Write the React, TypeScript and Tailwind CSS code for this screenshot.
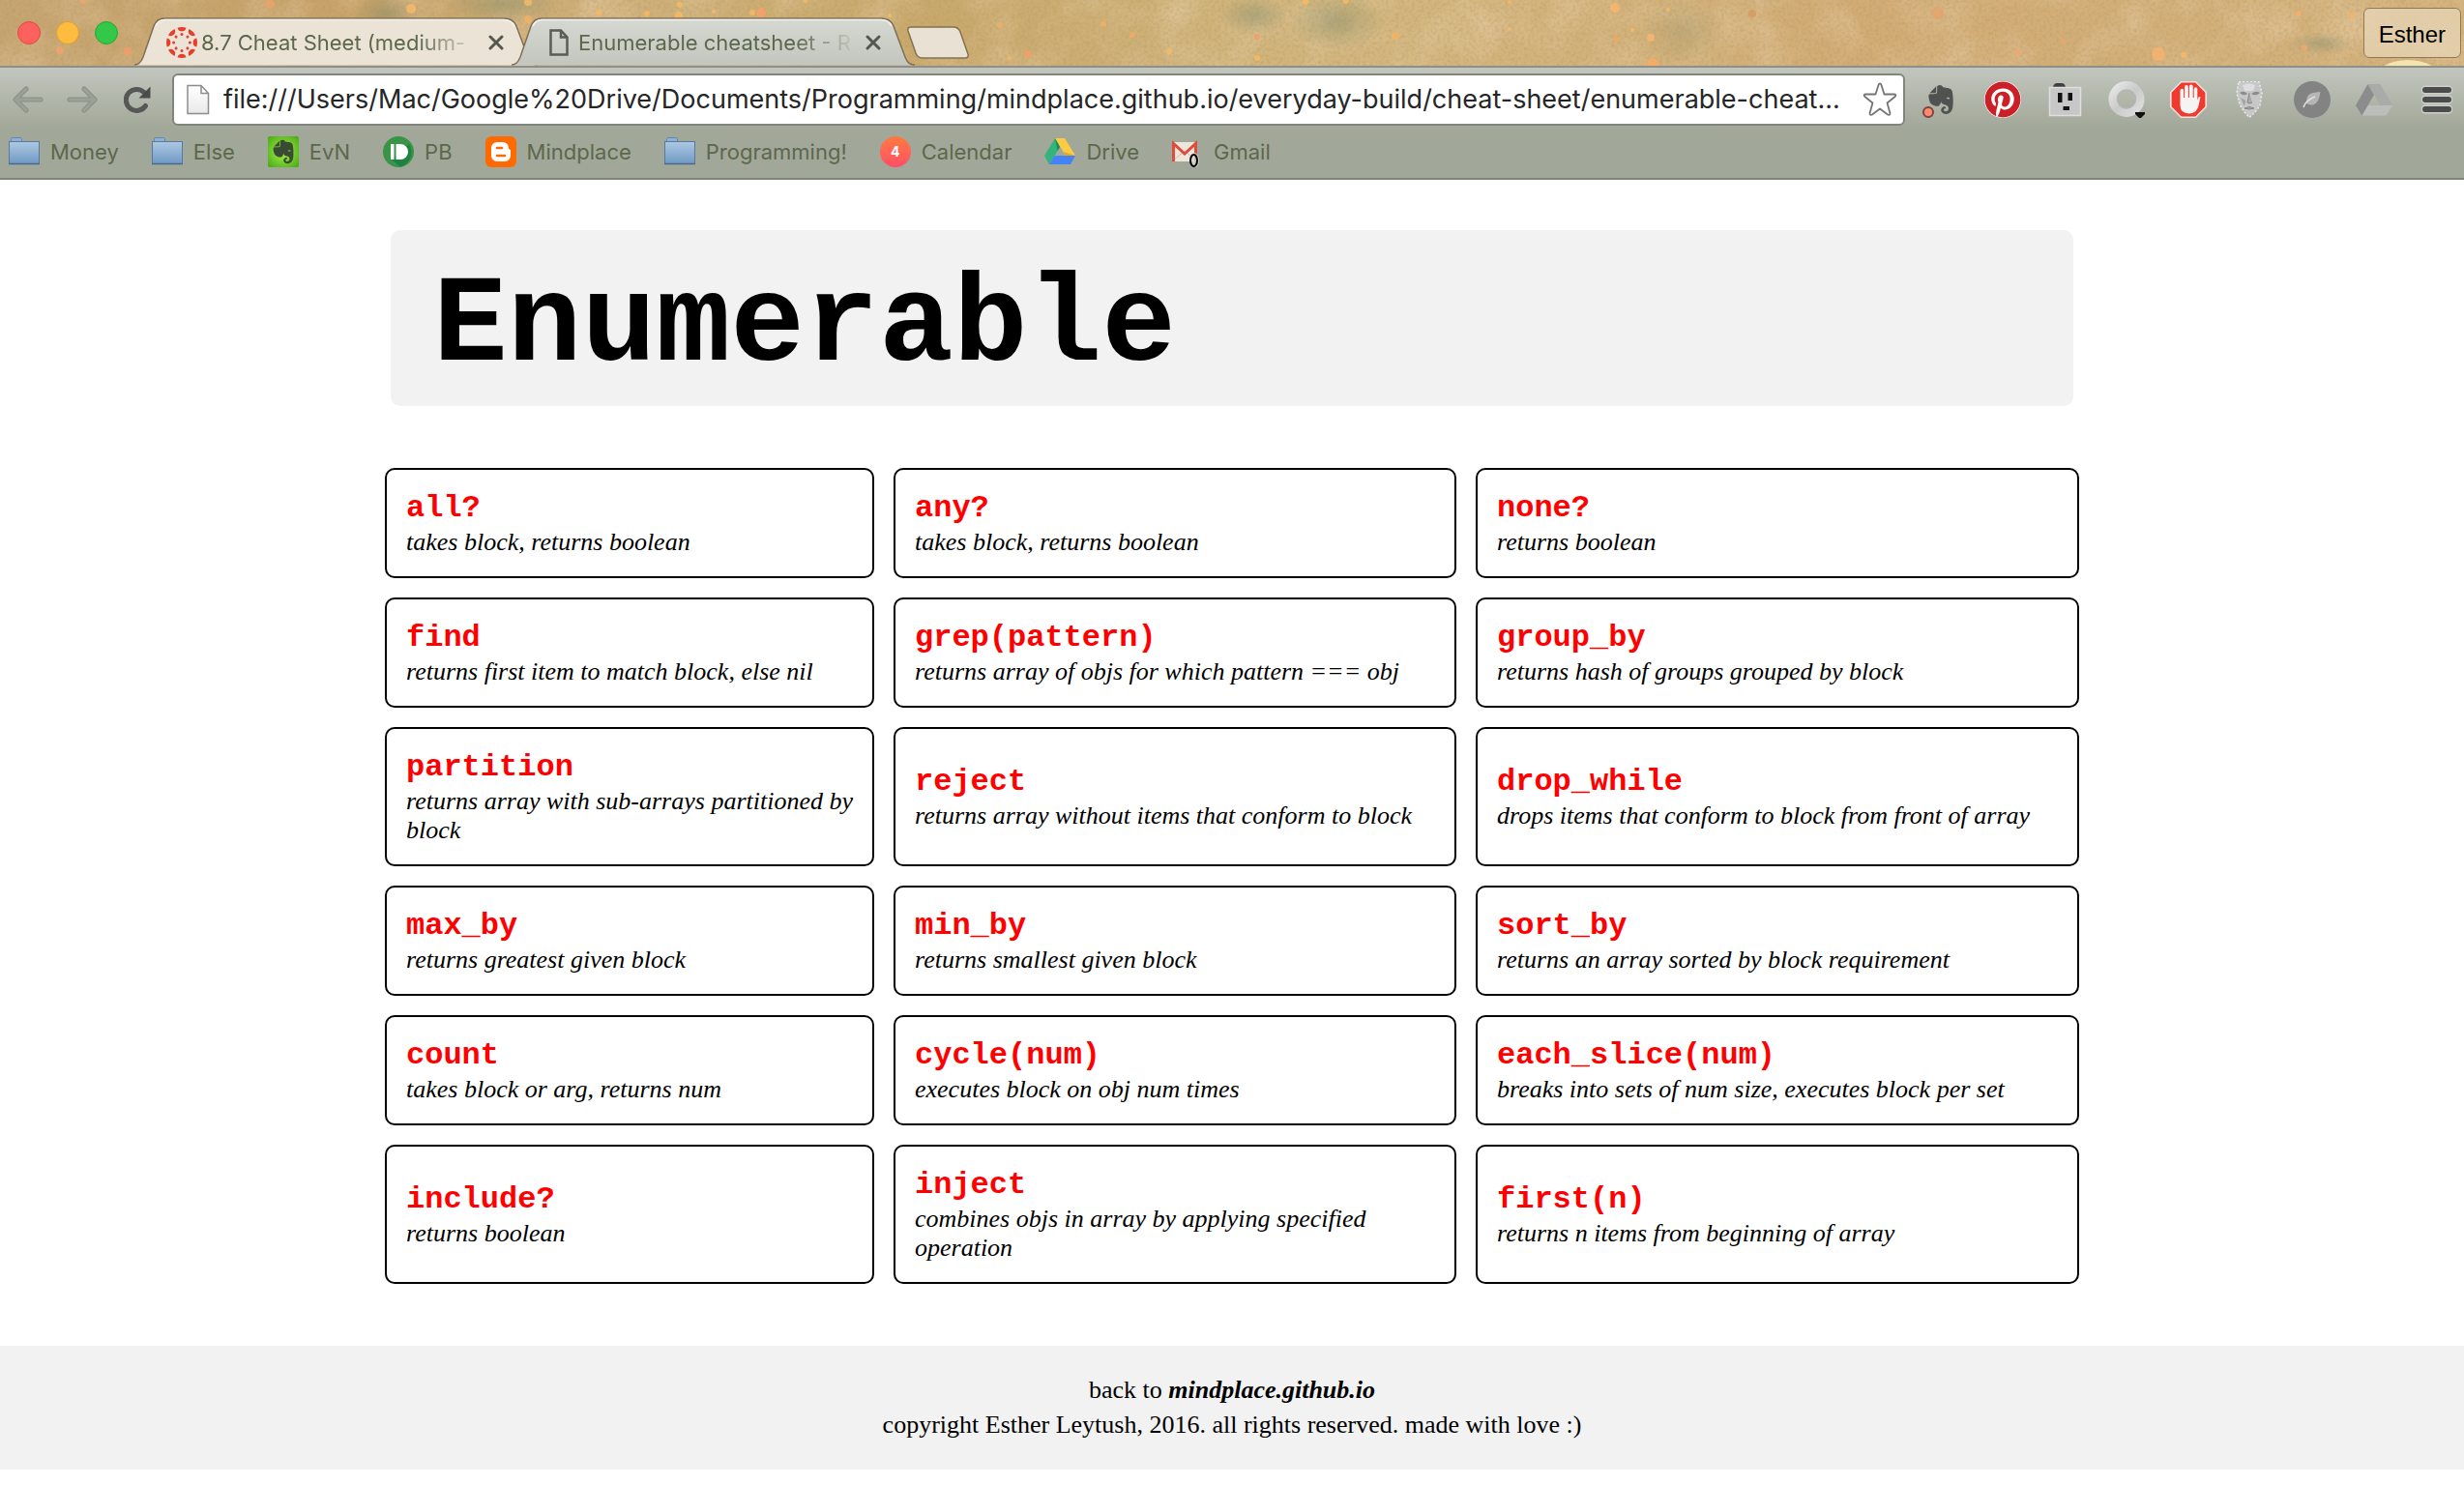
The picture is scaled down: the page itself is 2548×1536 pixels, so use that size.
import type { ReactNode } from "react";
import { FaEvernote, FaPinterest } from "react-icons/fa";

type Entry = { name: string; text: string };

const rows: Entry[][] = [
  [
    { name: "all?", text: "takes block, returns boolean" },
    { name: "any?", text: "takes block, returns boolean" },
    { name: "none?", text: "returns boolean" },
  ],
  [
    { name: "find", text: "returns first item to match block, else nil" },
    { name: "grep(pattern)", text: "returns array of objs for which pattern === obj" },
    { name: "group_by", text: "returns hash of groups grouped by block" },
  ],
  [
    { name: "partition", text: "returns array with sub-arrays partitioned by block" },
    { name: "reject", text: "returns array without items that conform to block" },
    { name: "drop_while", text: "drops items that conform to block from front of array" },
  ],
  [
    { name: "max_by", text: "returns greatest given block" },
    { name: "min_by", text: "returns smallest given block" },
    { name: "sort_by", text: "returns an array sorted by block requirement" },
  ],
  [
    { name: "count", text: "takes block or arg, returns num" },
    { name: "cycle(num)", text: "executes block on obj num times" },
    { name: "each_slice(num)", text: "breaks into sets of num size, executes block per set" },
  ],
  [
    { name: "include?", text: "returns boolean" },
    { name: "inject", text: "combines objs in array by applying specified operation" },
    { name: "first(n)", text: "returns n items from beginning of array" },
  ],
];

const specks: [number, number, number, string][] = [
  [86, 1, 3, "#f2a36b"], [62, 52, 4, "#f2a36b"], [132, 53, 4, "#f59b6a"], [279, 4, 5, "#e8a566"],
  [425, 9, 5, "#f8bc68"], [546, 2, 4, "#f8bc68"], [546, 20, 4, "#f5b265"], [619, 13, 3, "#fbb95f"],
  [669, 14, 3, "#fbb95f"], [703, 5, 3, "#fbb95f"], [702, 16, 4, "#fbb95f"], [738, 12, 2, "#fbb95f"],
  [787, 13, 5, "#f9a06a"], [778, 13, 3, "#fbb95f"], [833, 1, 2, "#fbb95f"], [920, 16, 2, "#fbb95f"],
  [1034, 26, 3, "#efb066"], [1063, 56, 4, "#f59b6a"], [1044, 60, 2, "#fbb95f"], [1141, 25, 3, "#efb066"],
  [1171, 36, 3, "#f5ab66"], [1209, 53, 3, "#fbb95f"], [1300, 38, 3, "#f59b6a"], [1300, 60, 3, "#fbb95f"],
  [1350, 2, 3, "#fbb95f"], [1392, 1, 3, "#fbb95f"], [1443, 37, 4, "#f5b265"], [1561, 2, 2, "#fbb95f"],
  [1561, 30, 2, "#fbb95f"], [1670, 8, 5, "#fbb56b"], [1688, 31, 2, "#fbb95f"], [1707, 39, 4, "#fbb56b"],
  [1709, 66, 6, "#f9ad5f"], [1671, 40, 3, "#efa861"], [1725, 10, 2, "#fbb95f"], [2004, 14, 6, "#e3a468"],
  [2087, 54, 3, "#f8a56a"], [2134, 43, 3, "#e9a870"], [2232, 56, 7, "#fab26c"], [2258, 57, 3, "#fbb95f"],
  [2377, 14, 3, "#f8b165"], [2383, 49, 3, "#f8a56a"], [2432, 16, 3, "#f8b165"], [1812, 14, 4, "#d59a5e"],
];

function Desktop() {
  return (
    <svg aria-hidden="true" className="absolute inset-0 h-full w-full" viewBox="0 0 2548 69" preserveAspectRatio="xMinYMin slice">
      <defs>
        <linearGradient id="sand" x1="0" x2="1">
          <stop offset="0" stopColor="#c6a570" />
          <stop offset="0.15" stopColor="#c9a368" />
          <stop offset="0.25" stopColor="#cfb17a" />
          <stop offset="0.38" stopColor="#c9a96b" />
          <stop offset="0.5" stopColor="#d0b47a" />
          <stop offset="0.56" stopColor="#d3b77e" />
          <stop offset="0.75" stopColor="#d2ac74" />
          <stop offset="1" stopColor="#d4b37c" />
        </linearGradient>
        <radialGradient id="moss">
          <stop offset="0" stopColor="#7f8a68" stopOpacity="0.45" />
          <stop offset="1" stopColor="#7f8a68" stopOpacity="0" />
        </radialGradient>
        <filter id="grain" x="0" y="0" width="100%" height="100%">
          <feTurbulence type="fractalNoise" baseFrequency="0.3" numOctaves="3" seed="4" />
          <feColorMatrix values="0 0 0 0 0.42  0 0 0 0 0.3  0 0 0 0 0.15  1.6 0 0 0 -0.65" />
        </filter>
        <filter id="cloud" x="0" y="0" width="100%" height="100%">
          <feTurbulence type="fractalNoise" baseFrequency="0.02" numOctaves="3" seed="9" />
          <feColorMatrix values="0 0 0 0 0.86  0 0 0 0 0.68  0 0 0 0 0.46  2 0 0 0 -0.8" />
        </filter>
      </defs>
      <rect width="2548" height="69" fill="url(#sand)" />
      <rect width="2548" height="69" filter="url(#cloud)" opacity="0.4" />
      <rect width="2548" height="69" filter="url(#grain)" opacity="0.5" />
      <ellipse cx="400" cy="14" rx="34" ry="22" fill="url(#moss)" />
      <ellipse cx="520" cy="4" rx="60" ry="20" fill="url(#moss)" />
      <ellipse cx="1298" cy="16" rx="36" ry="20" fill="url(#moss)" />
      <ellipse cx="1382" cy="22" rx="50" ry="30" fill="url(#moss)" />
      <ellipse cx="1740" cy="32" rx="44" ry="34" fill="url(#moss)" opacity="0.5" />
      <ellipse cx="2400" cy="45" rx="34" ry="12" fill="url(#moss)" />
      <ellipse cx="2490" cy="82" rx="34" ry="20" fill="#f3e3ae" />
      {specks.map(([x, y, r, c]) => (
        <circle key={`${x}-${y}`} cx={x} cy={y} r={r} fill={c} opacity="0.8" />
      ))}
    </svg>
  );
}

function Close() {
  return (
    <svg aria-hidden="true" viewBox="0 0 18 18" className="h-[18px] w-[18px]">
      <path d="M3 3l12 12M15 3L3 15" stroke="#54564f" strokeWidth="3" strokeLinecap="round" />
    </svg>
  );
}

function Tab({ title, icon, active }: { title: string; icon: ReactNode; active?: boolean }) {
  return (
    <div className={active ? "relative z-10 -ml-[27px] h-[50px] w-[417px]" : "relative h-[50px] w-[417px]"}>
      <svg aria-hidden="true" viewBox="0 0 417 50" className="absolute inset-0 h-full w-full">
        <defs>
          <linearGradient id="tabActive" x1="0" y1="0" x2="0" y2="1">
            <stop offset="0" stopColor="#d6d9d2" />
            <stop offset="1" stopColor="#c2c6be" />
          </linearGradient>
        </defs>
        <path
          d="M0 49.500C5 49 7 46 9 41L20 9C22 4 25 1 31 1H382C389 1 393 4 395 9L407 41C409 46 411 49 417 49.500Z"
          fill={active ? "url(#tabActive)" : "#ebe3d5"}
        />
        <path
          d="M0 49C5 49 7 46 9 41L20 9C22 4 25 1 31 1H382C389 1 393 4 395 9L407 41C409 46 411 49 417 49"
          fill="none"
          stroke="#7d6f55"
          strokeWidth="1.500"
        />
        <path d="M22 9C24 5 27 2.500 31 2.500H382C388 2.500 391 5 393 9" fill="none" stroke="#f3f2ec" strokeWidth="1.500" />
      </svg>
      <div className="relative flex h-full items-center pt-px pl-[33px]">
        <span className="flex w-8 shrink-0 justify-center">{icon}</span>
        <button
          type="button"
          className="ml-1 w-[284px] whitespace-nowrap text-left text-[22px] leading-8 text-[#5c674c] [mask-image:linear-gradient(to_right,black_78%,transparent_102%)]"
        >
          {title}
        </button>
        <button type="button" aria-label={`Close ${title}`} className="ml-3">
          <Close />
        </button>
      </div>
    </div>
  );
}

function CanvasLogo() {
  const spokes = [0, 45, 90, 135, 180, 225, 270, 315];
  return (
    <svg aria-hidden="true" viewBox="0 0 32 32" className="h-8 w-8">
      {spokes.map((a) => (
        <g key={a} transform={`rotate(${a} 16 16)`} fill="#e73d2b">
          <path d="M11.500 0.700A16 16 0 0 1 20.500 0.700A4.600 4.600 0 0 1 11.500 0.700Z" />
          <circle cx="16" cy="7.600" r="1.500" />
        </g>
      ))}
    </svg>
  );
}

function PageOutline() {
  return (
    <svg aria-hidden="true" viewBox="0 0 20 28" className="h-7 w-5">
      <path d="M1.500 1.500H12L18.500 8.500V26.500H1.500ZM12 1.500V8.500H18.500" fill="none" stroke="#5a5b57" strokeWidth="2.500" />
    </svg>
  );
}

function Folder() {
  return (
    <svg aria-hidden="true" viewBox="0 0 32 32" className="h-8 w-8">
      <defs>
        <linearGradient id="folder" x1="0" y1="0" x2="0" y2="1">
          <stop offset="0" stopColor="#adc8e3" />
          <stop offset="1" stopColor="#7099c4" />
        </linearGradient>
      </defs>
      <path d="M2.500 6V2.500Q2.500 1.500 3.500 1.500H12.500Q13.500 1.500 13.500 2.500V6" fill="#8fb0d2" stroke="#6488ae" />
      <rect x="0.500" y="5.500" width="31" height="23" fill="url(#folder)" stroke="#55799f" />
      <path d="M0 28.500H32" stroke="#48698c" strokeWidth="1.500" />
    </svg>
  );
}

function Evernote() {
  return (
    <span className="flex h-8 w-8 items-center justify-center rounded-xs bg-radial from-[#a6f34a] to-[#43a80e]">
      <FaEvernote aria-hidden="true" className="h-7 w-7 text-[#3b4a33]" />
    </span>
  );
}

function Pushbullet() {
  return (
    <svg aria-hidden="true" viewBox="0 0 32 32" className="h-8 w-8">
      <circle cx="16" cy="16" r="16" fill="#3a9447" />
      <path d="M27 8A16 16 0 0 1 18 31.800L9 24Z" fill="#1f8243" />
      <path d="M8 8h3.500v16H8zM13.500 8H18a8 8 0 0 1 0 16h-4.500z" fill="#fff" />
    </svg>
  );
}

function Blogger() {
  return (
    <span className="flex h-8 w-8 items-center justify-center overflow-hidden rounded-md bg-[#ff6a00]">
      <svg aria-hidden="true" viewBox="0 0 32 32" className="h-8 w-8">
        <path d="M12 6h6a6 6 0 0 1 6 6q0 2 2 2v6a6 6 0 0 1-6 6h-8a6 6 0 0 1-6-6v-8a6 6 0 0 1 6-6z" fill="#fff" />
        <path d="M12 12h5M12 20h8" stroke="#ff6a00" strokeWidth="2.500" strokeLinecap="round" />
      </svg>
    </span>
  );
}

function CalendarBadge() {
  return (
    <span className="flex h-8 w-8 items-center justify-center rounded-full bg-linear-to-b from-[#ff7a3c] to-[#ff4c66] text-sm font-bold text-white">
      4
    </span>
  );
}

function Drive() {
  return (
    <svg aria-hidden="true" viewBox="0 0 32 32" className="h-8 w-8">
      <path d="M11 2L0 20L5 29L16 11Z" fill="#34b37a" />
      <path d="M11 2H21L32 20H22Z" fill="#fdcb42" />
      <path d="M10.500 20H32L27 29H5Z" fill="#4284f4" />
      <path d="M11 2l5 9-2.500 4z" fill="#1c8a57" />
      <path d="M22 20l-2-4 12 4z" fill="#e2a91f" />
    </svg>
  );
}

function Gmail() {
  return (
    <svg aria-hidden="true" viewBox="0 0 32 32" className="h-8 w-8">
      <rect x="0" y="6" width="26" height="20" fill="#ece7da" />
      <path d="M0 26L13 15L26 26" fill="none" stroke="#cbc5b4" />
      <path d="M1.500 26V7.500L13 18L24.500 7.500V26" fill="none" stroke="#df4b3c" strokeWidth="3" />
      <ellipse cx="23" cy="25" rx="5" ry="8" fill="#d9dad3" opacity="0.8" />
      <ellipse cx="22.500" cy="25" rx="3.500" ry="6" fill="none" stroke="#000" strokeWidth="2" />
    </svg>
  );
}

const bookmarks: [string, ReactNode][] = [
  ["Money", <Folder />],
  ["Else", <Folder />],
  ["EvN", <Evernote />],
  ["PB", <Pushbullet />],
  ["Mindplace", <Blogger />],
  ["Programming!", <Folder />],
  ["Calendar", <CalendarBadge />],
  ["Drive", <Drive />],
  ["Gmail", <Gmail />],
];

function Arrow({ flip }: { flip?: boolean }) {
  return (
    <svg aria-hidden="true" viewBox="0 0 32 28" className={flip ? "h-7 w-8 rotate-180" : "h-7 w-8"}>
      <path d="M14 3L3 14L14 25M4 14H29" fill="none" stroke="#898f84" strokeWidth="5" strokeLinecap="round" strokeLinejoin="round" />
      <path d="M14 3L3 14L14 25M4 14H29" fill="none" stroke="#9ca197" strokeWidth="3" strokeLinecap="round" strokeLinejoin="round" />
    </svg>
  );
}

function Reload() {
  return (
    <svg aria-hidden="true" viewBox="0 0 28 28" className="h-7 w-7">
      <path d="M22.500 20.500A11 11 0 1 1 21 6.500" fill="none" stroke="#565756" strokeWidth="5" strokeLinecap="round" />
      <path d="M27.500 0.500V12.500H15.500Z" fill="#4a4b4a" />
    </svg>
  );
}

function PageIcon() {
  return (
    <svg aria-hidden="true" viewBox="0 0 24 32" className="h-8 w-6 shrink-0">
      <defs>
        <linearGradient id="sheet" x1="0" y1="0" x2="0" y2="1">
          <stop offset="0" stopColor="#fff" />
          <stop offset="1" stopColor="#e9e9e9" />
        </linearGradient>
      </defs>
      <path d="M1 1.500H15L22.500 9.500V30.500H1ZM15 1.500V9.500H22.500" fill="url(#sheet)" stroke="#8d8d8d" strokeWidth="1.500" />
    </svg>
  );
}

function Star() {
  return (
    <svg aria-hidden="true" viewBox="0 0 36 36" className="h-9 w-9">
      <path
        d="M18 1.500Q19 1.500 19.500 3L22.500 12.500H33Q35.500 13 33.500 15L25.500 21.500L28.500 32Q28.500 34.500 26 33.500L18 27.500L10 33.500Q7.500 34.500 7.500 32L10.500 21.500L2.500 15Q0.500 13 3 12.500H13.500L16.500 3Q17 1.500 18 1.500Z"
        fill="#fff"
        stroke="#757575"
        strokeWidth="1.800"
        strokeLinejoin="round"
      />
    </svg>
  );
}

function EvernoteClip() {
  return (
    <span className="relative flex h-[38px] w-[38px] items-center justify-center">
      <FaEvernote aria-hidden="true" className="h-[34px] w-[34px] text-[#505250]" />
      <span className="absolute bottom-0 left-0 h-3 w-3 rounded-full border-2 border-[#7b443c] bg-[#ff8a72]" />
    </span>
  );
}

function Outlet() {
  return (
    <svg aria-hidden="true" viewBox="0 0 38 38" className="h-[38px] w-[38px]">
      <path d="M7 6Q8 2 11 2H16Q19 2 20 6Z" fill="#3f403f" />
      <rect x="3.500" y="6.500" width="32" height="29" fill="#c6c7c6" stroke="#dedfde" strokeWidth="1.500" />
      <path d="M12 12h4.500v10H12zM22.500 12H27v8h-4.500zM17.500 26h6.500v4h-6.500z" fill="#111" />
    </svg>
  );
}

function Ring() {
  return (
    <svg aria-hidden="true" viewBox="0 0 38 38" className="h-[38px] w-[38px]">
      <defs>
        <linearGradient id="ring" x1="0" y1="0" x2="1" y2="1">
          <stop offset="0" stopColor="#e6e6e6" />
          <stop offset="0.5" stopColor="#c9cac9" />
          <stop offset="1" stopColor="#dedede" />
        </linearGradient>
      </defs>
      <circle cx="19" cy="18.500" r="14" fill="none" stroke="url(#ring)" strokeWidth="9" />
      <circle cx="19" cy="18.500" r="9.500" fill="none" stroke="#b3b5b2" strokeWidth="1.500" />
      <path d="M28 32H38V34L34 38H32L28 34Z" fill="#111" />
    </svg>
  );
}

function StopHand() {
  return (
    <svg aria-hidden="true" viewBox="0 0 38 38" className="h-[38px] w-[38px]">
      <path d="M11.500 0.800H26.500L37.200 11.500V26.500L26.500 37.200H11.500L0.800 26.500V11.500Z" fill="#ef3a2f" stroke="#f3e4e0" strokeWidth="1.600" />
      <path
        d="M10.500 20V9.500a1.800 1.800 0 0 1 3.600 0V17h1V6a1.900 1.900 0 0 1 3.800 0v11h1V5.500a1.900 1.900 0 0 1 3.800 0V17h1V8a1.800 1.800 0 0 1 3.600 0V20l-.5 2 1-4q.700-2.500 2.700-1.800L30 23q-1 10-10.500 10.500Q10.500 33 10.500 25Z"
        fill="#f6f4f3"
      />
    </svg>
  );
}

function Mask() {
  return (
    <svg aria-hidden="true" viewBox="0 0 38 38" className="h-[38px] w-[38px]">
      <path d="M7 1Q18-1 28 1L31 12L29 25L24 32L18 37.500L13 32L8 24L5 12Z" fill="#c6c7c6" stroke="#ececec" strokeWidth="1.500" strokeDasharray="2 2" />
      <path d="M8 12Q12 9 16 13Q12 16 8 12ZM20 13Q25 9 29 12Q25 16 20 13Z" fill="#8b8c8b" />
      <path d="M18 12L16 22Q18 24 21 22M13 28Q18 25 23 28Q18 30 13 28Z" fill="#a8a9a8" stroke="#868786" />
      <path d="M11 4Q18 1 24 4L22 10H13Z" fill="#dedede" />
      <path d="M9 17L14 20L13 26Z" fill="#a0a1a0" />
    </svg>
  );
}

function Leaf() {
  return (
    <svg aria-hidden="true" viewBox="0 0 38 38" className="h-[38px] w-[38px]">
      <circle cx="19" cy="19" r="19" fill="#828382" />
      <path d="M27.500 11Q26 22 21 24Q17 25.500 13.500 23Q12 15 18 12.500Q21 11.500 27.500 11Z" fill="#b4b5b4" />
      <path d="M22 16Q12 20 10 27" fill="none" stroke="#e0e0e0" strokeWidth="1.500" />
    </svg>
  );
}

function DriveGray() {
  return (
    <svg aria-hidden="true" viewBox="0 0 38 38" className="h-[38px] w-[38px]">
      <path d="M12.500 3L0 25L6.500 35.500L19 14Z" fill="#8b8c8b" />
      <path d="M12.500 3H25.500L38 25H25.500Z" fill="#a9aba9" />
      <path d="M13 25H38L31.500 35.500H6.500Z" fill="#bcbebc" />
    </svg>
  );
}

function Menu() {
  return (
    <svg aria-hidden="true" viewBox="0 0 32 38" className="h-[38px] w-8">
      <path d="M4 9H28M4 19H28M4 29H28" stroke="#cdd0c9" strokeWidth="9" strokeLinecap="round" />
      <path d="M4 9H28M4 19H28M4 29H28" stroke="#4b4c4b" strokeWidth="6" strokeLinecap="round" />
    </svg>
  );
}

const extensions: [string, ReactNode][] = [
  ["Web Clipper", <EvernoteClip />],
  ["Pinterest", <FaPinterest aria-hidden="true" className="h-[38px] w-[38px] rounded-full bg-white text-[#cb2027]" />],
  ["Outlet", <Outlet />],
  ["Ring", <Ring />],
  ["Blocker", <StopHand />],
  ["Mask", <Mask />],
  ["Leaf", <Leaf />],
  ["Drive extension", <DriveGray />],
];

function Browser() {
  return (
    <div className="font-[Inter,'Liberation_Sans',sans-serif]">
      <div className="relative flex h-[68px] items-end overflow-hidden bg-[#cdac6e]">
        <Desktop />
        <div className="relative mb-[22px] ml-[18px] mr-[17px] flex gap-4">
          <button type="button" aria-label="Close window" className="h-6 w-6 rounded-full border border-[#e2463f] bg-[#fc615d]" />
          <button type="button" aria-label="Minimize window" className="h-6 w-6 rounded-full border border-[#e0a02a] bg-[#fdbc40]" />
          <button type="button" aria-label="Zoom window" className="h-6 w-6 rounded-full border border-[#24a732] bg-[#34c84a]" />
        </div>
        <Tab title="8.7 Cheat Sheet (medium-" icon={<CanvasLogo />} />
        <Tab active title="Enumerable cheatsheet - R" icon={<PageOutline />} />
        <button type="button" aria-label="New tab" className="relative -ml-2 mb-[7px]">
          <svg aria-hidden="true" viewBox="0 0 64 34" className="block h-[34px] w-16">
            <path
              d="M4 1H48Q53 1 55 6L63 29Q64 33 60 33H16Q11 33 9 28L1 5Q0 1 4 1Z"
              fill="#e9e1d4"
              stroke="#84724f"
              strokeWidth="1.500"
            />
          </svg>
        </button>
        <button
          type="button"
          className="relative mb-2 ml-auto mr-[3px] h-[52px] rounded-md border border-[#8d7a55] bg-[#e6d3b4]/80 px-[15px] pt-1 font-['Liberation_Sans',sans-serif] text-2xl text-black"
        >
          Esther
        </button>
      </div>
      <div className="border-b-2 border-t-2 border-b-[#80857b] border-t-[#8e9088] bg-linear-to-b from-[#c2c6be] to-[#a2a899] to-55%">
        <div className="flex items-center pt-[6px] pr-[12px]">
          <button type="button" aria-label="Back" className="ml-[13px]">
            <Arrow />
          </button>
          <button type="button" aria-label="Forward" className="ml-6">
            <Arrow flip />
          </button>
          <button type="button" aria-label="Reload" className="ml-[27px]">
            <Reload />
          </button>
          <label className="ml-[22px] flex h-[54px] min-w-0 flex-1 items-center rounded-md border-2 border-[#81857d] bg-white pl-[13px] pr-[6px]">
            <PageIcon />
            <input
              type="text"
              aria-label="Address"
              defaultValue="file:///Users/Mac/Google%20Drive/Documents/Programming/mindplace.github.io/everyday-build/cheat-sheet/enumerable-cheat..."
              className="ml-[14px] min-w-0 flex-1 bg-transparent text-[27px] leading-9 text-[#262626] outline-none"
            />
            <button type="button" aria-label="Bookmark this page" className="shrink-0">
              <Star />
            </button>
          </label>
          <div className="ml-[18px] flex gap-[26px]">
            {extensions.map(([name, icon]) => (
              <button key={name} type="button" aria-label={name}>
                {icon}
              </button>
            ))}
            <button type="button" aria-label="Menu" className="ml-1">
              <Menu />
            </button>
          </div>
        </div>
        <nav aria-label="Bookmarks" className="flex h-[54px] items-center gap-[34px] pl-[9px]">
          {bookmarks.map(([name, icon]) => (
            <a key={name} href="#" className="flex items-center gap-[11px] text-[22px] leading-8 text-[#5c674c]">
              {icon}
              {name}
            </a>
          ))}
        </nav>
      </div>
    </div>
  );
}

export default function App() {
  return (
    <div className="min-h-screen bg-white text-black">
      <Browser />
      <main className="mx-auto w-full max-w-[1792px] pt-[52px] pb-6 font-['Liberation_Serif',serif]">
        <header className="mx-[26px] mb-11 rounded-[10px] bg-[#f2f2f2] px-11 pt-9 pb-[18px]">
          <h1 className="font-['Courier_New','Liberation_Mono',monospace] text-[128px] font-bold leading-none">Enumerable</h1>
        </header>
        <table className="mb-5 w-full table-fixed border-separate border-spacing-5 text-left">
          <colgroup>
            <col className="w-[506px]" />
            <col className="w-[582px]" />
            <col className="w-[624px]" />
          </colgroup>
          <tbody>
            {rows.map((row) => (
              <tr key={row[0].name}>
                {row.map((entry) => (
                  <td key={entry.name} className="rounded-[10px] border-2 border-black p-5 align-middle">
                    <h2 className="font-['Courier_New','Liberation_Mono',monospace] text-[32px] font-bold leading-10 text-[#ff0000]">
                      {entry.name}
                    </h2>
                    <p className="text-[26px] italic leading-[30px]">{entry.text}</p>
                  </td>
                ))}
              </tr>
            ))}
          </tbody>
        </table>
      </main>
      <footer className="bg-[#f2f2f2] py-7 text-center font-['Liberation_Serif',serif] text-[26px] leading-9">
        <p>
          back to{" "}
          <a href="https://mindplace.github.io" className="font-bold italic">
            mindplace.github.io
          </a>
        </p>
        <p>copyright Esther Leytush, 2016. all rights reserved. made with love :)</p>
      </footer>
    </div>
  );
}
